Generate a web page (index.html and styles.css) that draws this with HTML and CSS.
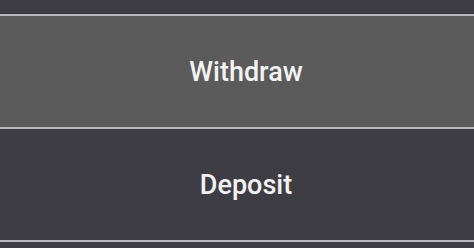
FILE: index.html
```html
<!DOCTYPE html>
<html lang="en">
<head>
<meta charset="utf-8">
<title>Actions</title>
<link rel="stylesheet" href="styles.css">
</head>
<body>
<div class="menu">
  <div class="top-gap"></div>
  <button class="action action-active">Withdraw</button>
  <button class="action">Deposit</button>
  <div class="bottom-rule"></div>
</div>
</body>
</html>
```
FILE: styles.css
```css
html, body {
  margin: 0;
  padding: 0;
  background: #3e3d43;
  height: 100%;
  overflow: hidden;
}
.menu {
  display: flex;
  flex-direction: column;
  width: 100%;
}
.top-gap {
  height: 13px;
  background: #3e3d43;
  border-bottom: 1px solid #35343a;
}
.action {
  display: flex;
  align-items: center;
  justify-content: center;
  height: 113px;
  box-sizing: border-box;
  margin: 0;
  padding: 0 0 0 18px;
  border: 0;
  border-top: 2px solid #b9b9bb;
  background: #3e3d43;
  color: #f2f2f2;
  font-family: Roboto, "Liberation Sans", sans-serif;
  font-size: 27px;
  font-weight: 500;
  width: 100%;
}
.action-active {
  background: #5b5b5b;
}
.bottom-rule {
  border-top: 2px solid #b9b9bb;
  height: 6px;
  background: #3e3d43;
}
```
